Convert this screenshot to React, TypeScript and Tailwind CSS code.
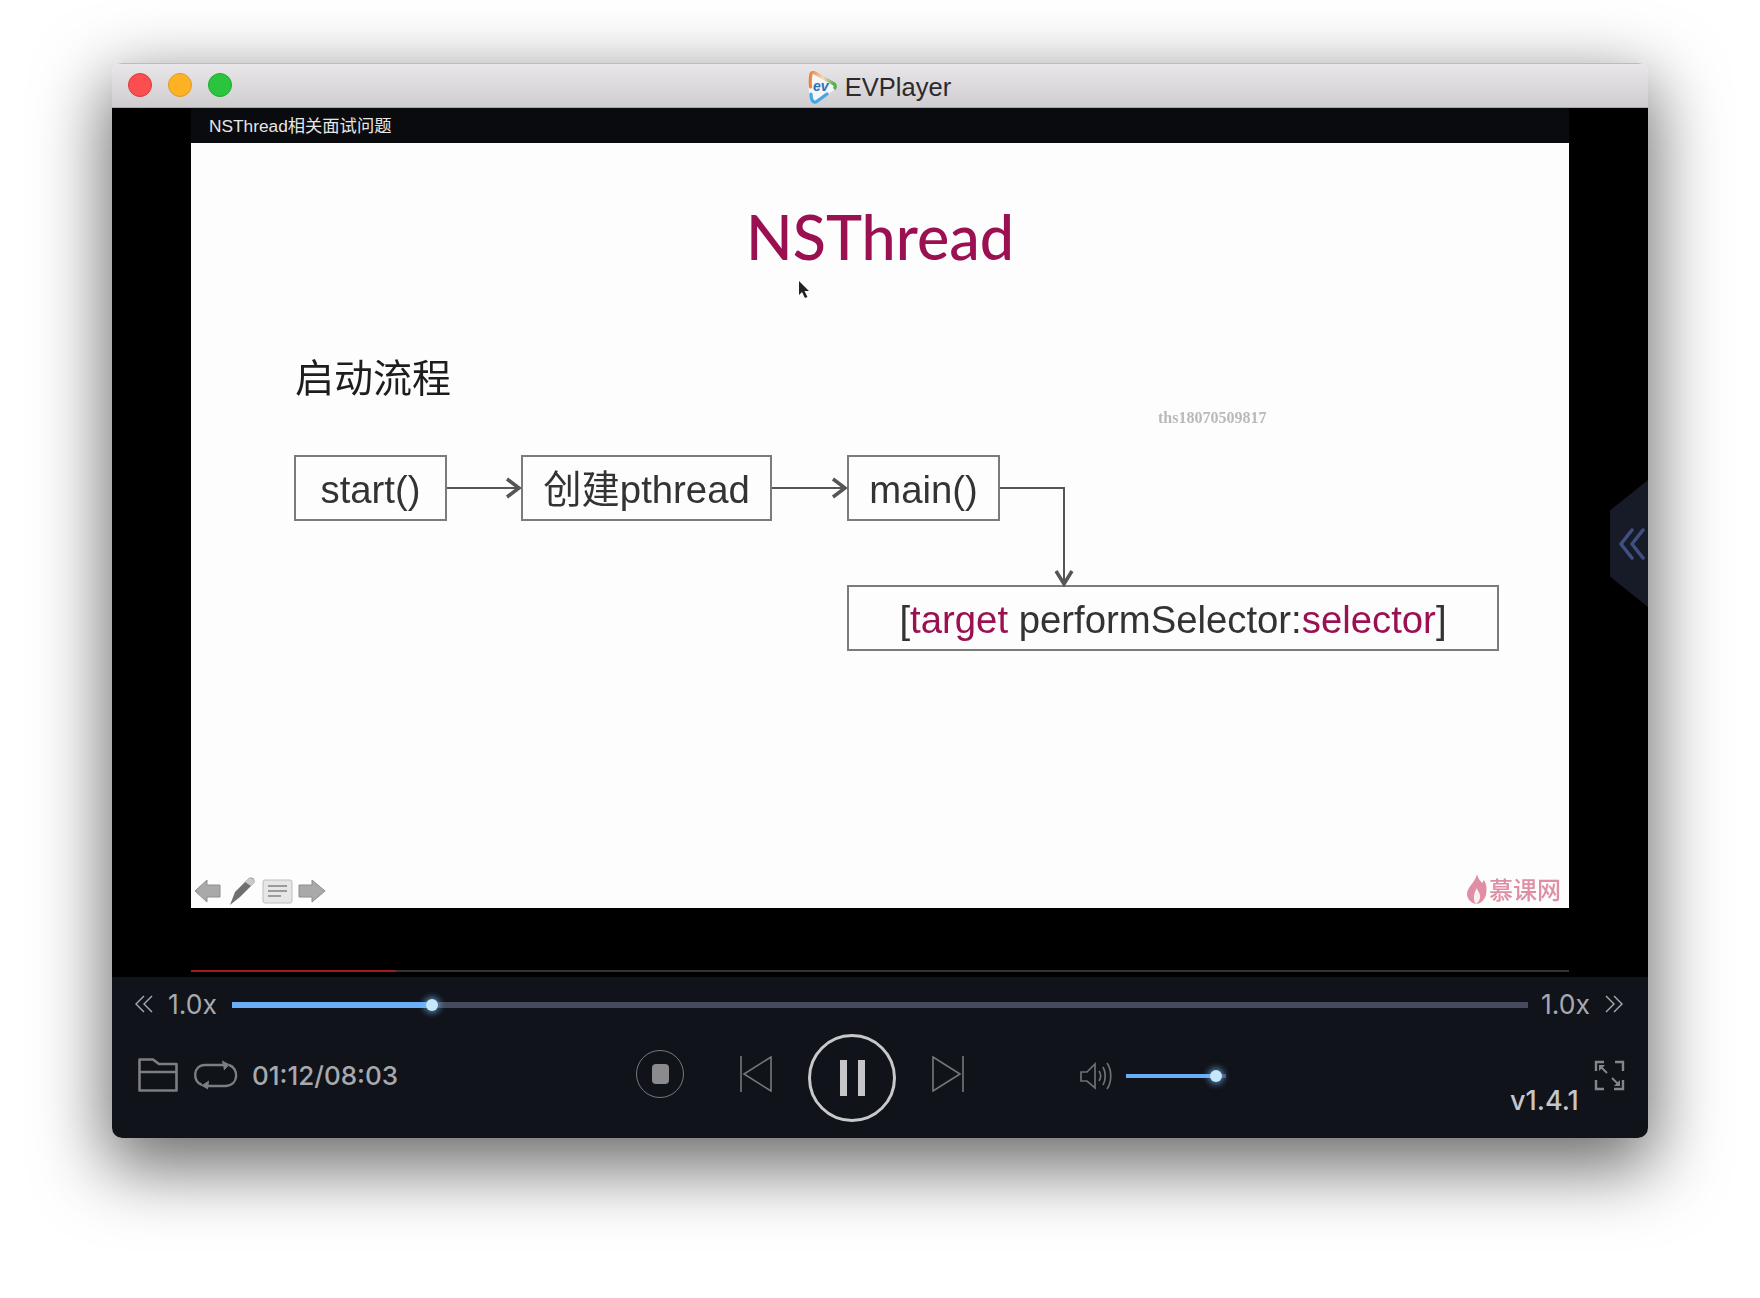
import React from "react";

const uiFont = "font-['Inter','Noto_Sans_CJK_SC',sans-serif]";
const slideFont = "font-['Liberation_Sans','Noto_Sans_CJK_SC',sans-serif]";

function TrafficLights(): JSX.Element {
  return (
    <div className="flex items-center gap-4 pl-[16px]">
      <span className="h-6 w-6 rounded-full border border-[#d9393a] bg-[#fc4d4f]" />
      <span className="h-6 w-6 rounded-full border border-[#dd9a20] bg-[#fdb225]" />
      <span className="h-6 w-6 rounded-full border border-[#22a82f] bg-[#2ac53d]" />
    </div>
  );
}

function EvLogo(): JSX.Element {
  return (
    <svg width="30" height="33" viewBox="0 0 30 33" className="shrink-0">
      <defs>
        <linearGradient id="ev-top" x1="0" y1="0" x2="1" y2="0">
          <stop offset="0" stopColor="#e8843a" />
          <stop offset="0.55" stopColor="#f2d9c0" />
          <stop offset="1" stopColor="#58ad52" />
        </linearGradient>
      </defs>
      <path d="M3 3 C2 2 5 0 7 1 L27 12 C30 14 30 17 27 19 L10 31 C7 33 5 32 4 29 C1 21 1 11 3 3 Z" fill="#f4f6f8" />
      <path d="M3.5 16 C3 11 3 8 4 3 C5 1 6 1 8 2 L27 13" fill="none" stroke="url(#ev-top)" strokeWidth="3.2" strokeLinecap="round" />
      <path d="M27 13 C29 15 29 16 27 18" fill="none" stroke="#58ad52" strokeWidth="3.2" />
      <path d="M4 23 C4 27 5 32 9 31 L20 23" fill="none" stroke="#46a7e0" strokeWidth="3.2" strokeLinecap="round" />
      <text x="6" y="20" fontSize="14" fontStyle="italic" fontWeight="700" fill="#2d6fb5" fontFamily="Liberation Sans, sans-serif">ev</text>
    </svg>
  );
}

function SlideToolbar(): JSX.Element {
  return (
    <svg width="132" height="32" viewBox="0 0 132 32">
      <path d="M1 16 L13 5 V10 H26 V22 H13 V27 Z" fill="#a9a9a9" stroke="#8e8e8e" />
      <path d="M36 30 L41 17 L55 3 C58 1 62 5 60 8 L46 22 Z" fill="#6f6f6f" />
      <path d="M54 4 C57 1 62 5 60 8 L57 11 L51 7 Z" fill="#c9c9c9" />
      <rect x="69" y="5" width="29" height="23" rx="2" fill="#e6e6e6" stroke="#bdbdbd" />
      <path d="M74 11 H93 M74 16 H93 M74 21 H87" stroke="#9a9a9a" strokeWidth="2" />
      <path d="M131 16 L118 5 V10 H105 V22 H118 V27 Z" fill="#a9a9a9" stroke="#8e8e8e" />
    </svg>
  );
}

function Flame(): JSX.Element {
  return (
    <svg width="20" height="30" viewBox="0 0 20 30">
      <path d="M10 0 C11 5 13 6 15 9 L17 6 C20 11 20 16 19 21 C17 27 13 30 9 30 C4 29 0 25 0 20 C0 13 8 9 10 0 Z" fill="#df8ea3" />
      <path d="M10 14 C11 18 14 20 13 24 C12 28 10 29 9 30 C6 27 6 20 10 14 Z" fill="#fbeef1" />
    </svg>
  );
}

function Box({
  className,
  children,
}: {
  className: string;
  children: React.ReactNode;
}): JSX.Element {
  return (
    <div
      className={`absolute flex items-center justify-center border-2 border-[#7b7b7b] pt-[4px] text-[38.3px] text-[#333] ${className}`}
    >
      {children}
    </div>
  );
}

function Slide(): JSX.Element {
  return (
    <div className={`relative h-[765px] bg-[#fdfdfd] blur-[0.4px] ${slideFont}`}>
      <div className="absolute left-0 right-0 top-[54px] text-center font-['Lato',sans-serif] text-[61px] font-medium leading-[80px] text-[#9b1050]">
        NSThread
      </div>
      {/* mouse pointer caught in the recording */}
      <svg width="12" height="20" viewBox="0 0 12 20" className="absolute left-[607px] top-[137px]">
        <path d="M1 1 V15 L4 12 L7 18 L9.5 17 L6.5 11 H11 Z" fill="#222" />
      </svg>
      <div className="absolute left-[104px] top-[208px] font-['Noto_Sans_CJK_SC',sans-serif] text-[39px] leading-[48px] text-[#1d1d1d]">
        启动流程
      </div>
      <div className="absolute left-[967px] top-[266px] font-['Liberation_Serif',serif] text-[16px] font-bold leading-[18px] text-[#b9b9b9]">
        ths18070509817
      </div>

      <Box className="left-[103px] top-[312px] h-[66px] w-[153px]">start()</Box>
      <Box className="left-[330px] top-[312px] h-[66px] w-[251px]">创建pthread</Box>
      <Box className="left-[656px] top-[312px] h-[66px] w-[153px]">main()</Box>
      <Box className="left-[656px] top-[442px] h-[66px] w-[652px]">
        <span>
          [<span className="text-[#9b1050]">target</span> performSelector:
          <span className="text-[#9b1050]">selector</span>]
        </span>
      </Box>

      <svg width="1378" height="765" viewBox="0 0 1378 765" className="pointer-events-none absolute left-0 top-0" fill="none" stroke="#555" strokeWidth="2">
        <path d="M256 345 H328" />
        <path d="M316 336 L328 345 L316 354" strokeWidth="3.5" />
        <path d="M581 345 H654" />
        <path d="M642 336 L654 345 L642 354" strokeWidth="3.5" />
        <path d="M809 345 H873 V441" />
        <path d="M865 428 L873 441 L881 428" strokeWidth="3.5" />
      </svg>

      <div className="absolute bottom-[1px] left-[3px]">
        <SlideToolbar />
      </div>
      <div className="absolute bottom-[4px] right-[8px] flex items-center gap-[2px] font-['Noto_Sans_CJK_SC',sans-serif] text-[24px] font-medium leading-[30px] text-[#df8ea3]">
        <Flame />
        <span>慕课网</span>
      </div>
    </div>
  );
}

function Thumb({ className }: { className: string }): JSX.Element {
  return (
    <span
      className={`absolute top-1/2 h-3 w-3 -translate-x-1/2 -translate-y-1/2 rounded-full bg-[#c5e6fb] shadow-[0_0_6px_2px_rgba(120,190,250,0.65)] ${className}`}
    />
  );
}

function Chevrons({ dir }: { dir: "left" | "right" }): JSX.Element {
  return (
    <svg width="20" height="20" viewBox="0 0 20 20" fill="none" stroke="#a9abb0" strokeWidth="1.4" className={`mb-[2px] block shrink-0 ${dir === "right" ? "rotate-180" : ""}`}>
      <path d="M10 2 L2 10 L10 18" />
      <path d="M18 2 L10 10 L18 18" />
    </svg>
  );
}

function SpeedRow(): JSX.Element {
  return (
    <div className={`flex h-[56px] items-center pl-[22px] pr-[24px] ${uiFont} text-[26.5px] text-[#a8a9ae]`}>
      <Chevrons dir="left" />
      <span className="ml-[14px] w-[49px]">1.0x</span>
      <div className="relative ml-[15px] h-[6px] flex-1 bg-[#454b5c]">
        <div className="h-full w-[200px] bg-[#69aef7]" />
        <Thumb className="left-[200px]" />
      </div>
      <span className="ml-[13px] w-[50px]">1.0x</span>
      <span className="ml-[13px]">
        <Chevrons dir="right" />
      </span>
    </div>
  );
}

function FolderIcon(): JSX.Element {
  return (
    <svg width="40" height="34" viewBox="0 0 40 34" fill="none" stroke="#7d7e82" strokeWidth="2.6" strokeLinejoin="round">
      <path d="M1.5 32.5 V1.5 H15 L21 6 H38.5 V32.5 Z" />
      <path d="M1.5 14 H38.5" />
    </svg>
  );
}

function LoopIcon(): JSX.Element {
  return (
    <svg width="45" height="30" viewBox="0 0 45 30" fill="none" stroke="#7d7e82" strokeWidth="2.4">
      <path d="M9 25 C-1 22 0 5 12 5 H30" />
      <path d="M36 5 C46 8 46 25 33 26 H15" />
      <path d="M29 1 L36 4.5 L31 10" fill="#7d7e82" strokeWidth="1" />
      <path d="M16 21 L9 25.5 L15 29" fill="#7d7e82" strokeWidth="1" />
    </svg>
  );
}

function TransportIcon({ flip = false }: { flip?: boolean }): JSX.Element {
  return (
    <svg width="32" height="36" viewBox="0 0 32 36" fill="none" stroke="#77787c" strokeWidth="1.6" className={flip ? "-scale-x-100" : ""}>
      <path d="M1 0 V36" />
      <path d="M31 1 V35 L4 18 Z" />
    </svg>
  );
}

function SpeakerIcon(): JSX.Element {
  return (
    <svg width="33" height="28" viewBox="0 0 33 28" fill="none" stroke="#6f7074" strokeWidth="1.7">
      <path d="M1 10 H7 L15 2 V26 L7 19 H1 Z" />
      <path d="M19 9 C21 12 21 16 19 19" />
      <path d="M23 5 C26 10 26 18 23 23" />
      <path d="M27 1 C32 8 32 20 27 27" />
    </svg>
  );
}

function FullscreenIcon(): JSX.Element {
  return (
    <svg width="31" height="31" viewBox="0 0 31 31" fill="none" stroke="#85868a" strokeWidth="2.4">
      <path d="M10 2 H2 V11" />
      <path d="M21 2 H29 V11" />
      <path d="M2 20 V29 H10" />
      <path d="M20 29 H29 V20" />
      <path d="M6 6 L13 13" strokeWidth="2" />
      <path d="M18 18 L25 25" strokeWidth="2" />
      <path d="M5 5 H11 L5 11 Z" fill="#85868a" stroke="none" />
      <path d="M26 26 H20 L26 20 Z" fill="#85868a" stroke="none" />
    </svg>
  );
}

function TransportRow(): JSX.Element {
  return (
    <div className={`flex h-[105px] items-start pl-[26px] pt-[8px] ${uiFont}`}>
      <div className="mt-[10px] flex h-[48px] items-center">
        <FolderIcon />
        <span className="ml-[15px]">
          <LoopIcon />
        </span>
        <span className="ml-[14px] w-[144px] text-[26px] font-medium text-[#a8a9ae]">01:12/08:03</span>
      </div>
      <div className="ml-[240px] mt-[9px] flex h-[48px] w-[48px] items-center justify-center rounded-full border border-[#77787c]">
        <span className="h-[20px] w-[17px] rounded-[4px] bg-[#8b8b8d]" />
      </div>
      <div className="ml-[56px] mt-[15px]">
        <TransportIcon />
      </div>
      <div className="ml-[36px] mt-[-7px] flex h-[88px] w-[88px] items-center justify-center gap-[11px] rounded-full border-[3px] border-[#c8c8ca]">
        <span className="h-[36px] w-[7px] bg-[#c6c6c8]" />
        <span className="h-[36px] w-[7px] bg-[#c6c6c8]" />
      </div>
      <div className="ml-[36px] mt-[15px]">
        <TransportIcon flip />
      </div>
      <div className="ml-[116px] mt-[21px]">
        <SpeakerIcon />
      </div>
      <div className="relative ml-[13px] mt-[33px] h-[4px] w-[100px] bg-[#454b5c]">
        <div className="h-full w-[90px] bg-[#69aef7]" />
        <Thumb className="left-[90px]" />
      </div>
      <div className="ml-[284px] mt-[45px] w-[72px] text-[27px] font-medium leading-[30px] text-[#c4c6cb]">v1.4.1</div>
      <div className="ml-[12px] mt-[19px]">
        <FullscreenIcon />
      </div>
    </div>
  );
}

export default function App(): JSX.Element {
  return (
    <div className="min-h-[1298px] bg-white pl-[112px] pt-[63px]">
      <div className="w-[1536px] overflow-hidden rounded-[10px] shadow-[0_24px_70px_6px_rgba(0,0,0,0.58)]">
        <header className="relative flex h-[45px] items-center border-b border-[#a9a7a9] bg-gradient-to-b from-[#e9e7e9] to-[#cfcdcf] shadow-[inset_0_1px_0_#bdbbbd]">
          <TrafficLights />
          <div className="absolute inset-x-0 top-[8px] flex items-center justify-center gap-[8px] pr-[2px]">
            <EvLogo />
            <span className="font-['Liberation_Sans',sans-serif] text-[25.5px] leading-[33px] text-[#2c2a2c]">
              EVPlayer
            </span>
          </div>
        </header>

        <div className="relative h-[869px] bg-black px-[79px]">
          <div className="flex h-[35px] items-center bg-[#0a0b0e] pl-[18px] pt-[2px] font-['Liberation_Sans','Noto_Sans_CJK_SC',sans-serif] text-[17.3px] text-[#e6e6e6]">
            NSThread相关面试问题
          </div>
          <Slide />
          <div className="mt-[62px] h-[2px] bg-[#333]">
            <div className="h-full w-[205px] bg-[#a01c1c]" />
          </div>
          {/* slide-out panel handle */}
          <div className="absolute right-0 top-[372px] flex h-[127px] w-[38px] items-center justify-center bg-[#161b27] pl-[5px] [clip-path:polygon(100%_0,100%_100%,0_76%,0_24%)]">
            <svg width="26" height="32" viewBox="0 0 26 32" fill="none" stroke="#3f5080" strokeWidth="3.5" strokeLinecap="round">
              <path d="M13 2 L2 16 L13 30" />
              <path d="M24 2 L13 16 L24 30" />
            </svg>
          </div>
        </div>

        <div className="h-[161px] bg-[#10131a]">
          <SpeedRow />
          <TransportRow />
        </div>
      </div>
    </div>
  );
}
